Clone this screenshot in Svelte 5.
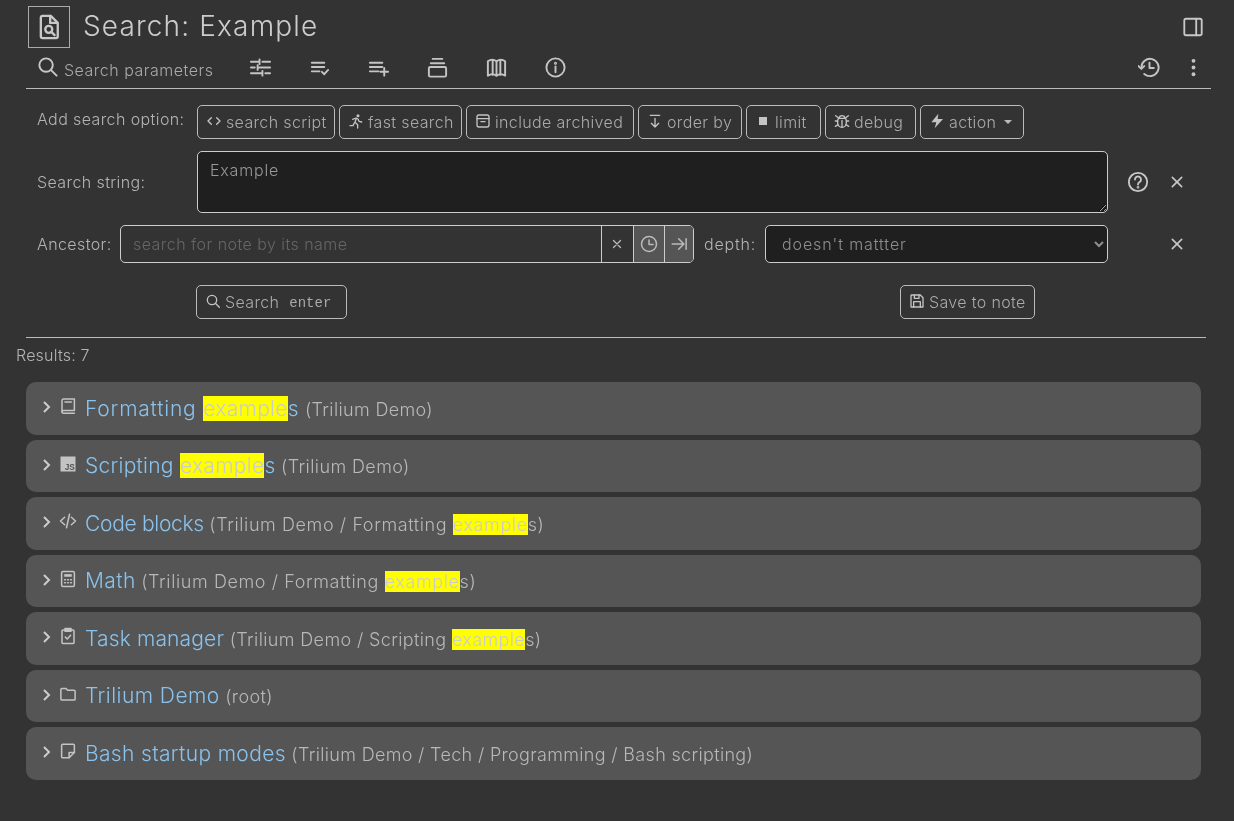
<script>
  const icons = {
    fileFind: '<path d="M6.5 2.5h7l6 6v11.5a1.5 1.5 0 0 1-1.5 1.5H6.5A1.5 1.5 0 0 1 5 20V4a1.500 1.500 0 0 1 1.500-1.500z"/><path d="M13 2.500V8.500h6"/><circle cx="11.800" cy="14" r="3"/><path d="M14 16.200l2.800 2.800"/>',
    search: '<circle cx="10.500" cy="10.500" r="7"/><path d="M15.500 15.500l6 6"/>',
    sliders: '<path d="M2 6h9M14 6h8M11 3.500v5M2 12h4M9 12h13M9 9.500v5M2 18h12M17 18h5M14 15.500v5"/>',
    listCheck: '<path d="M4 7h13M4 11.500h13M4 16h8M14.500 16.500l2.500 2.500 4-4.500"/>',
    listPlus: '<path d="M3 7h13M3 11.500h13M3 16h9M18 12.500v8M14 16.500h8"/>',
    collection: '<path d="M7 3h10M5 7.500h14"/><rect x="3" y="11.500" width="18" height="10" rx="1.500"/>',
    map: '<path d="M3 5.500c3-2 6-2 9 0 3-2 6-2 9 0v15c-3-2-6-2-9 0-3-2-6-2-9 0z"/><path d="M8 4.500v15M12 5.500v15M16 4.500v15"/>',
    info: '<circle cx="12" cy="12" r="9.500"/><path d="M12 11v6"/><circle cx="12" cy="7.500" r=".6"/>',
    history: '<path d="M3.500 12a9 9 0 1 1 3 6.700"/><path d="M0.500 10.500l3 3 3-3"/><path d="M12 7v5.500h4.500"/>',
    dots: '<circle cx="12" cy="5" r="2" fill="currentColor" stroke="none"/><circle cx="12" cy="12" r="2" fill="currentColor" stroke="none"/><circle cx="12" cy="19" r="2" fill="currentColor" stroke="none"/>',
    sidebar: '<rect x="2.500" y="3" width="19" height="18" rx="2"/><path d="M15.500 3v18"/>',
    code: '<path d="M8 7l-5 5 5 5M16 7l5 5-5 5"/>',
    run: '<circle cx="15" cy="4" r="2.300" fill="currentColor" stroke="none"/><path d="M7 9.500l5-2 3 1.500 1.500 3.500 4 1M12.500 8l-2 6 4 3.500v5M9.500 15l-2 4-4.500 0"/>',
    archive: '<rect x="3" y="3" width="18" height="18" rx="3"/><path d="M3 8.500h18M9 13h6"/>',
    orderBy: '<path d="M5 3.500h14M12 8v13M6.500 15.500l5.500 5.500 5.500-5.500"/>',
    square: '<rect x="6" y="6" width="12" height="12" fill="currentColor" stroke="none"/>',
    bug: '<path d="M8 8h8a3 3 0 0 1 2.500 3v4a6.500 6.500 0 0 1-13 0v-4A3 3 0 0 1 8 8z"/><path d="M12 11v10M8 8a4 4 0 0 1 8 0M2 12h3.500M18.500 12H22M2 20l4-2.500M22 20l-4-2.500M2.500 4l4 3M21.500 4l-4 3"/>',
    bolt: '<path d="M14 1L3.500 14H11l-2.500 9L21 9h-8z" fill="currentColor" stroke="none"/>',
    help: '<circle cx="12" cy="12" r="10"/><path d="M8.700 9.300a3.300 3.300 0 1 1 5 2.800c-1 .7-1.700 1.300-1.700 2.700"/><circle cx="12" cy="17.800" r=".5"/>',
    x: '<path d="M5 5l14 14M19 5L5 19"/>',
    time: '<circle cx="12" cy="12" r="10"/><path d="M12 6.500V12.500h5.500"/>',
    toRight: '<path d="M3 12h15M11.500 5l7 7-7 7M21.500 5v14"/>',
    save: '<path d="M4 3h13l4 4v14H3V4a1 1 0 0 1 1-1z"/><path d="M8 3v5h7V3M7 21v-8h10v8"/>',
    book: '<path d="M6 2.500h14.500v15.500H6a2 2 0 0 0-2 2V5a2.500 2.500 0 0 1 2-2.500z"/><path d="M4 20a2 2 0 0 0 2 1.500h14.500M8 6.500h8.500"/>',
    calc: '<rect x="3.500" y="2" width="17" height="20" rx="2"/><rect x="7" y="5.500" width="10" height="3.500" fill="currentColor" stroke="none"/><path d="M7.500 13h1M11.500 13h1M15.500 13h1M7.500 17h1M11.500 17h1M15.500 17h1"/>',
    task: '<path d="M8 4H5.500A1.500 1.500 0 0 0 4 5.500v15A1.500 1.500 0 0 0 5.500 22h13a1.500 1.500 0 0 0 1.500-1.500v-15A1.500 1.500 0 0 0 18.500 4H16"/><rect x="8" y="2" width="8" height="3.500" fill="currentColor"/><path d="M8.500 13.500l2.500 2.500 4.500-5"/>',
    folder: '<path d="M2.500 6a1.500 1.500 0 0 1 1.500-1.500h5l2.500 2.500H20a1.500 1.500 0 0 1 1.500 1.500v10a1.500 1.500 0 0 1-1.500 1.500H4A1.500 1.500 0 0 1 2.500 19z"/>',
    note: '<path d="M5 3h14a1.500 1.500 0 0 1 1.500 1.500V14l-7 7H5a1.500 1.500 0 0 1-1.500-1.500v-15A1.500 1.500 0 0 1 5 3z"/><path d="M13.500 21v-7h7"/>',
    slash: '<path d="M7.500 7l-5.500 5 5.500 5M16.500 7l5.500 5-5.500 5M14 3l-4 18"/>'
  };

  const options = [
    { icon: 'code', label: 'search script', w: 138 },
    { icon: 'run', label: 'fast search', w: 123 },
    { icon: 'archive', label: 'include archived', w: 168 },
    { icon: 'orderBy', label: 'order by', w: 104 },
    { icon: 'square', label: 'limit', w: 75 },
    { icon: 'bug', label: 'debug', w: 91 },
    { icon: 'bolt', label: 'action', w: 104, caret: true }
  ];

  const toolbar = ['sliders', 'listCheck', 'listPlus', 'collection', 'map', 'info'];

  const results = [
    { icon: 'book', ls: 0.8, pls: 0.35, title: ['Formatting ', 'example', 's'], path: ['(Trilium Demo)'] },
    { icon: 'js', ls: 0.25, pls: 0.4, title: ['Scripting ', 'example', 's'], path: ['(Trilium Demo)'] },
    { icon: 'slash', ls: -0.3, pls: 0.6, title: ['Code blocks'], path: ['(Trilium Demo / Formatting ', 'example', 's)'] },
    { icon: 'calc', ls: 0.4, pls: 0.6, title: ['Math'], path: ['(Trilium Demo / Formatting ', 'example', 's)'] },
    { icon: 'task', ls: 0.15, pls: 0.37, title: ['Task manager'], path: ['(Trilium Demo / Scripting ', 'example', 's)'] },
    { icon: 'folder', ls: 0.45, pls: 0.4, title: ['Trilium Demo'], path: ['(root)'] },
    { icon: 'note', ls: 0.35, pls: 0.33, title: ['Bash startup modes'], path: ['(Trilium Demo / Tech / Programming / Bash scripting)'] }
  ];
</script>

{#snippet icon(name, cls)}
  <svg class={cls} viewBox="0 0 24 24" fill="none" stroke="currentColor" stroke-width="2" stroke-linecap="round" stroke-linejoin="round" aria-hidden="true">{@html icons[name]}</svg>
{/snippet}

{#snippet marked(parts)}
  {#each parts as p, i}{#if i === 1}<mark>{p}</mark>{:else}{p}{/if}{/each}
{/snippet}

<div class="page">
  <header class="head">
    <div class="note-icon">{@render icon('fileFind', 'i-note')}</div>
    <h1>Search: Example</h1>
    <span class="spacer"></span>
    {@render icon('sidebar', 'i-side')}
  </header>

  <nav class="tabs">
    <div class="tab">{@render icon('search', 'i-tab')}<span>Search parameters</span></div>
    <div class="tools">
      {#each toolbar as t}
        <span class="tool">{@render icon(t, 'i-tool')}</span>
      {/each}
    </div>
    <span class="spacer"></span>
    <span class="tool right-a">{@render icon('history', 'i-tool')}</span>
    <span class="tool right-b">{@render icon('dots', 'i-tool')}</span>
  </nav>

  <section class="params">
    <div class="row options">
      <span class="label first">Add search option:</span>
      <div class="btns">
        {#each options as o}
          <button class="btn" style="width:{o.w}px">
            {@render icon(o.icon, 'i-btn')}<span>{o.label}</span>{#if o.caret}<i class="caret"></i>{/if}
          </button>
        {/each}
      </div>
    </div>

    <div class="row string">
      <span class="label first">Search string:</span>
      <textarea value="Example"></textarea>
      <span class="act help">{@render icon('help', 'i-help')}</span>
      <span class="act close">{@render icon('x', 'i-x')}</span>
    </div>

    <div class="row ancestor">
      <span class="label anc">Ancestor:</span>
      <div class="group">
        <input placeholder="search for note by its name" />
        <span class="cell">{@render icon('x', 'i-cell-x')}</span>
        <span class="cell lit">{@render icon('time', 'i-cell')}</span>
        <span class="cell lit last">{@render icon('toRight', 'i-cell')}</span>
      </div>
      <span class="label depth">depth:</span>
      <select>
        <option>doesn't mattter</option>
      </select>
      <span class="act close far">{@render icon('x', 'i-x')}</span>
    </div>

    <div class="row actions">
      <button class="btn go">{@render icon('search', 'i-btn')}<span>Search</span><kbd>enter</kbd></button>
      <button class="btn save">{@render icon('save', 'i-btn')}<span>Save to note</span></button>
    </div>
  </section>

  <hr />
  <div class="count">Results: 7</div>

  <div class="list">
    {#each results as r}
      <article class="card">
        <svg class="chev" viewBox="0 0 10 14" fill="none" stroke="currentColor" stroke-width="2"><path d="M2 2l5 5-5 5"/></svg>
        <span class="r-icon">
          {#if r.icon === 'js'}
            <svg class="i-res" viewBox="0 0 24 24"><rect x="2" y="2" width="20" height="20" fill="#c4c4c4"/><text x="21" y="20" text-anchor="end" class="js">JS</text></svg>
          {:else}
            {@render icon(r.icon, 'i-res')}
          {/if}
        </span>
        <span class="title" style="letter-spacing:{r.ls}px">{@render marked(r.title)}</span>
        <small class="path" style="letter-spacing:{r.pls}px">{@render marked(r.path)}</small>
      </article>
    {/each}
  </div>
</div>

<style>
  :global(body) {
    margin: 0;
    background: #333;
  }
  .page {
    font-family: Inter, "Noto Sans", sans-serif;
    font-weight: 300;
    color: #b8b8b8;
    height: 821px;
    overflow: hidden;
    box-sizing: border-box;
    font-size: 16px;
    will-change: transform;
  }
  .spacer { flex: 1; }
  svg { display: block; flex: none; }

  .head {
    display: flex;
    align-items: center;
    padding: 6px 30px 0 28px;
    height: 42px;
  }
  .note-icon {
    width: 42px;
    height: 42px;
    box-sizing: border-box;
    border: 1px solid #aaa;
    display: flex;
    align-items: center;
    justify-content: center;
    flex: none;
  }
  .i-note { width: 28px; height: 28px; color: #c8c8c8; }
  h1 {
    margin: -3px 0 0 13px;
    font-size: 28px;
    font-weight: 300;
    color: #ccc;
    letter-spacing: 1.15px;
  }
  .i-side { width: 22px; height: 22px; color: #c8c8c8; }

  .tabs {
    display: flex;
    align-items: center;
    height: 40px;
    margin: 0 23px 0 26px;
    border-bottom: 1px solid #bbb;
  }
  .tab {
    display: flex;
    align-items: center;
    padding-left: 10px;
    width: 187px;
    box-sizing: border-box;
    flex: none;
    gap: 5px;
    color: #aaa;
    white-space: nowrap;
  }
  .tab span { letter-spacing: 0.5px; margin-top: 3px; }
  .i-tab { width: 23px; height: 23px; color: #c8c8c8; margin-top: -4px; }
  .tools { display: flex; margin-left: 18px; }
  .tool {
    width: 59px;
    display: flex;
    justify-content: center;
    color: #c4c4c4;
    margin-top: -1px;
  }
  .i-tool { width: 23px; height: 23px; }
  .right-a { width: 44px; margin-right: 4px; }
  .right-b { width: 36px; }

  .params { padding-left: 37px; }
  .row { display: flex; align-items: center; }
  .options { margin-top: 16px; height: 34px; }
  .label { color: #b4b4b4; flex: none; letter-spacing: 0.4px; }
  .label.first { width: 160px; }
  .options .label { margin-top: -6px; }
  .btns { display: flex; gap: 4px; }
  .btn {
    height: 34px;
    box-sizing: border-box;
    background: transparent;
    border: 1px solid #bbb;
    border-radius: 5px;
    color: #aaa;
    font: inherit;
    display: flex;
    align-items: center;
    justify-content: flex-start;
    gap: 4px;
    padding: 0 8px;
    white-space: nowrap;
    letter-spacing: 0.35px;
  }
  .i-btn { width: 16px; height: 16px; color: #c4c4c4; margin-top: -3px; }
  .caret {
    width: 0;
    height: 0;
    margin-left: 4px;
    border-top: 4.500px solid #bbb;
    border-left: 4.500px solid transparent;
    border-right: 4.500px solid transparent;
  }

  .string { margin-top: 12px; height: 62px; }
  textarea {
    width: 911px;
    height: 62px;
    box-sizing: border-box;
    background: #1f1f1f;
    border: 1px solid #ccc;
    border-radius: 5px;
    color: #999;
    font: inherit;
    letter-spacing: 0.8px;
    padding: 8px 12px;
    flex: none;
    margin: 0;
    outline: none;
  }
  .act { display: flex; justify-content: center; color: #c8c8c8; flex: none; }
  .help { margin-left: 19px; width: 22px; }
  .i-help { width: 22px; height: 22px; }
  .close { margin-left: 17px; width: 22px; }
  .close.far { margin-left: 58px; }
  .i-x { width: 16px; height: 16px; stroke-width: 2.400px; }

  .ancestor { margin-top: 12px; height: 38px; }
  .anc { width: 73px; }
  .group {
    display: flex;
    width: 574px;
    height: 38px;
    box-sizing: border-box;
    margin-left: 10px;
    border: 1px solid #ccc;
    border-radius: 5px;
    overflow: hidden;
    flex: none;
  }
  input {
    flex: 1;
    min-width: 0;
    background: transparent;
    border: 0;
    outline: none;
    font: inherit;
    letter-spacing: 0.45px;
    color: #ccc;
    padding: 0 12px;
  }
  input::placeholder { color: #666; opacity: 1; }
  .cell {
    width: 31.500px;
    flex: none;
    border-left: 1px solid #ccc;
    display: flex;
    align-items: center;
    justify-content: center;
    color: #bbb;
    box-sizing: border-box;
  }
  .cell.lit { background: #555; }
  .cell.last { width: 29px; }
  .i-cell { width: 18px; height: 18px; }
  .i-cell-x { width: 12px; height: 12px; stroke-width: 2.600px; }
  .depth { margin-left: 10px; width: 61px; letter-spacing: 0.8px; }
  select {
    width: 343px;
    height: 38px;
    box-sizing: border-box;
    background: #1f1f1f;
    border: 1px solid #ccc;
    border-radius: 5px;
    color: #8f8f8f;
    font: inherit;
    padding-left: 12px;
    outline: none;
    margin: 0;
    flex: none;
    letter-spacing: 0.9px;
  }

  .actions { margin-top: 22px; margin-left: 159px; height: 34px; }
  .go { width: 151px; }
  .save { width: 135px; margin-left: 553px; }
  kbd {
    font-family: "Liberation Mono", monospace;
    font-size: 14px;
    font-weight: 400;
    letter-spacing: 0;
    margin-left: 6px;
    color: #aaa;
    margin-top: 2px;
  }

  hr {
    margin: 18px 28px 0 26px;
    border: 0;
    border-top: 1px solid #bbb;
  }
  .count {
    margin: 7px 0 0 16px;
    line-height: 20px;
    color: #b4b4b4;
    letter-spacing: 0.2px;
  }

  .list {
    display: flex;
    flex-direction: column;
    gap: 5px;
    margin: 17px 33px 0 26px;
  }
  .card {
    height: 52.500px;
    box-sizing: border-box;
    background: #555;
    border-radius: 10px;
    display: flex;
    align-items: center;
    padding-left: 16px;
    white-space: nowrap;
  }
  .chev { width: 10px; height: 14px; color: #ccc; margin-top: -2px; }
  .r-icon { margin: -4px 0 0 7px; width: 18px; color: #c4c4c4; }
  .i-res { width: 18px; height: 18px; }
  .js { font: 700 11px "Liberation Sans", sans-serif; fill: #555; }
  .title {
    margin-left: 8px;
    font-size: 21px;
    color: #8ac2ec;
  }
  .title mark { letter-spacing: 0.3px; }
  .path {
    margin: 2px 0 0 5.500px;
    font-size: 18px;
    color: #b8b8b8;
  }
  mark {
    background: #ff0;
    color: #ccc;
  }
</style>
